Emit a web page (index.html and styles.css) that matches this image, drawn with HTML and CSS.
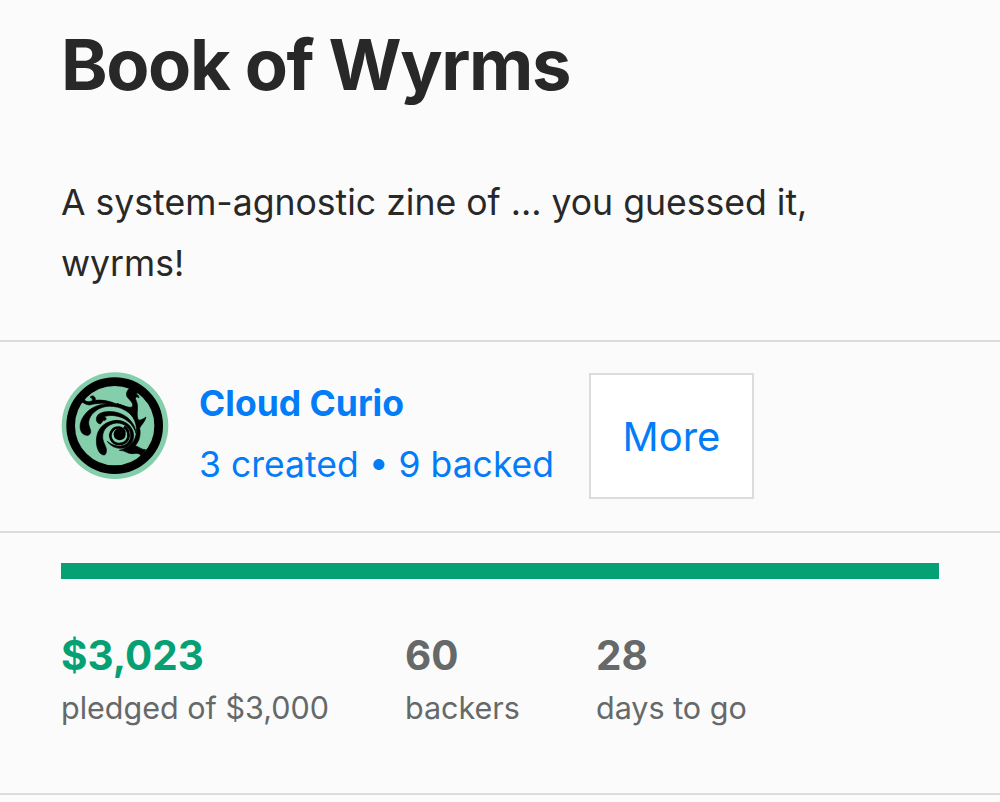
FILE: index.html
```html
<!DOCTYPE html>
<html lang="en">
<head>
    <meta charset="UTF-8">
    <meta name="viewport" content="width=device-width, initial-scale=1.0">
    <title>Book of Wyrms</title>
    <link rel="stylesheet" href="styles.css">
</head>
<body>
    <header class="intro">
        <h1>Book of Wyrms</h1>
        <p>A system-agnostic zine of ... you guessed it, wyrms!</p>
    </header>

    <!-- Creator -->
    <section class="creator">
        <svg class="avatar" viewBox="18 18 324 324">
            <circle cx="180" cy="179" r="160" fill="#84ceac"/>
            <circle cx="179" cy="179" r="132" fill="none" stroke="#000" stroke-width="26"/>
            <g stroke="#000" stroke-width="2" stroke-linejoin="round">
                <!-- outer arm with its bulb on the left -->
                <path d="M94 208 C74 205 70 178 82 157 C97 129 125 115 158 113 C192 110 226 122 246 148 L240 160 C218 129 184 117 151 122 C124 127 103 147 101 168 C100 184 113 195 104 205 C101 208 98 209 94 208 Z"/>
                <!-- lower arm with its bulb at the bottom -->
                <path d="M146 267 C129 265 120 236 126 208 C132 182 155 165 183 163 C213 162 236 184 236 209 C235 232 219 246 199 247 C181 247 166 240 157 226 C170 237 183 241 197 240 C215 238 227 226 227 207 C226 187 209 171 185 171 C161 173 142 190 143 214 C144 233 157 243 154 257 C153 264 150 267 146 267 Z"/>
                <!-- small hook -->
                <path d="M136 174 C122 172 120 153 132 144 C151 132 187 135 209 149 C229 161 242 181 243 202 C236 180 222 165 203 156 C183 147 159 146 147 153 C154 154 156 160 150 163 C143 161 141 170 136 174 Z"/>
                <!-- curls that join the ring -->
                <path d="M82 91 C88 108 99 110 112 104 C113 98 109 93 105 94 C113 84 123 93 121 103 C143 100 171 107 190 117 L182 121 C155 108 128 111 103 117 C94 117 84 110 76 105 Z"/>
                <path d="M186 112 C208 121 225 127 232 122 C236 112 227 105 219 96 C211 87 214 76 224 66 L252 77 C231 90 245 101 247 115 C249 136 243 150 251 163 C262 162 267 157 273 153 C269 170 258 176 254 187 C258 206 253 225 241 239 C253 243 261 252 272 251 L259 270 C253 260 243 262 234 263 C219 265 209 252 193 253 C218 247 238 231 243 206 C249 177 236 149 214 132 Z"/>
                <path d="M232 87 C240 80 252 85 252 96 C247 91 241 92 239 99 Z"/>
            </g>
            <!-- spiral -->
            <circle cx="194" cy="205" r="18"/>
            <path d="M209 200 C204 182 183 180 172 193 C158 211 171 233 192 234 C212 235 224 218 220 201 C218 192 213 186 207 182" fill="none" stroke="#000" stroke-width="8"/>
        </svg>
        <a class="creator-info" href="#">
            <strong>Cloud Curio</strong>
            <span>3 created • 9 backed</span>
        </a>
        <button class="more">More</button>
    </section>

    <!-- Funding -->
    <section class="funding">
        <div class="progress"></div>
        <div class="stats">
            <div class="stat pledged"><strong>$3,023</strong><span>pledged of $3,000</span></div>
            <div class="stat backers"><strong>60</strong><span>backers</span></div>
            <div class="stat days"><strong>28</strong><span>days to go</span></div>
        </div>
    </section>
</body>
</html>
```
FILE: styles.css
```css
* {
    box-sizing: border-box;
}

body {
    margin: 0;
    font-family: Inter, "Liberation Sans", sans-serif;
    background-color: #fbfbfb;
    color: #282828;
    overflow: hidden;
}

.intro {
    height: 342px;
    padding: 21px 61px 0;
    border-bottom: 2px solid #dcdcdc;
}

h1 {
    margin: 0;
    font-size: 70.5px;
    line-height: 88px;
    letter-spacing: -1.4px;
}

.intro p {
    width: 800px;
    margin: 63px 0 0;
    font-size: 35.6px;
    line-height: 61px;
}

.creator {
    display: flex;
    align-items: flex-start;
    height: 191px;
    padding: 31px 61px 0;
    border-bottom: 2px solid #dcdcdc;
}

.avatar {
    width: 108px;
    height: 108px;
    margin-top: -1px;
}

.creator-info {
    display: flex;
    flex-direction: column;
    width: 390px;
    margin-left: 30px;
    font-size: 35.5px;
    line-height: 61px;
    color: #037cf7;
    text-decoration: none;
}

.more {
    width: 165px;
    height: 126px;
    padding: 0;
    border: 2px solid #dcdcdc;
    background-color: #fff;
    color: #037cf7;
    font-family: inherit;
    font-size: 40px;
}

.funding {
    height: 262px;
    padding: 30px 61px 0;
    border-bottom: 2px solid #dcdcdc;
}

.progress {
    height: 16px;
    background-color: #05a073;
}

.stats {
    display: flex;
    margin-top: 51px;
    color: #656969;
}

.stat {
    display: flex;
    flex-direction: column;
}

.stat strong {
    font-size: 40.4px;
    line-height: 52px;
}

.stat span {
    font-size: 30.5px;
    line-height: 52px;
}

.pledged {
    width: 344px;
}

.pledged strong {
    color: #05a073;
}

.backers {
    width: 191px;
}
```
